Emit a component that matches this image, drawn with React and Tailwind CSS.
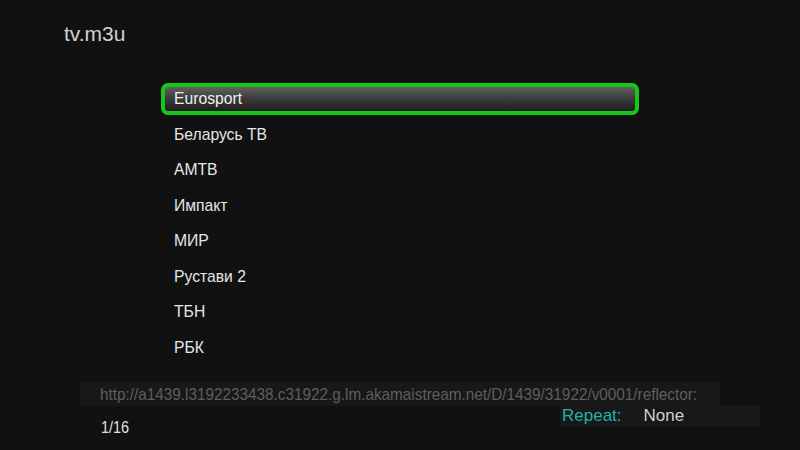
export default function App() {
  const items = ["Eurosport", "Беларусь ТВ", "АМТВ", "Импакт", "МИР", "Рустави 2", "ТБН", "РБК"];
  return (
    <div className="w-[800px] h-[450px] bg-[#111111] overflow-hidden flex flex-col" style={{ fontFamily: '"Liberation Sans", Arial, sans-serif' }}>
      <div className="h-[81px] pl-[64px] pt-[22px] text-[21px] leading-[24px] text-[#d2d2d2]">tv.m3u</div>
      <div className="ml-[161px] w-[478px] flex flex-col">
        {items.map((t, i) => (
          <div key={i} className="h-[35.57px] flex items-center">
            {i === 0 ? (
              <div className="w-full h-[32px] rounded-[7px] border-[4px] border-[#16c816] bg-gradient-to-b from-[#626262] via-[#3a3a3a] to-[#1e1e1e] flex items-center pl-[9px] text-[15.7px] text-[#f0f0f0]">
                {t}
              </div>
            ) : (
              <div className="pl-[13px] text-[15.7px] text-[#e6e6e6]">{t}</div>
            )}
          </div>
        ))}
      </div>
      <div className="mt-[17.5px] ml-[80px] w-[640px] h-[23px] bg-[#181818] flex items-center pl-[20px] text-[17px] text-[#5e5e5e] whitespace-nowrap">
        <span className="inline-block origin-left scale-x-[0.9]">http://a1439.l3192233438.c31922.g.lm.akamaistream.net/D/1439/31922/v0001/reflector:</span>
      </div>
      <div className="flex">
        <div className="ml-[101px] mt-[12px] text-[16px] text-[#e0e0e0] leading-[20px] inline-block origin-left scale-x-[0.9]">1/16</div>
        <div className="ml-auto mr-[40px] w-[200px] h-[22px] -mt-[1px] bg-[#181818] flex items-center text-[17px]">
          <span className="ml-[2px] text-[#22b0a8]">Repeat:</span>
          <span className="ml-[22px] text-[#cfcfcf]">None</span>
        </div>
      </div>
    </div>
  );
}
